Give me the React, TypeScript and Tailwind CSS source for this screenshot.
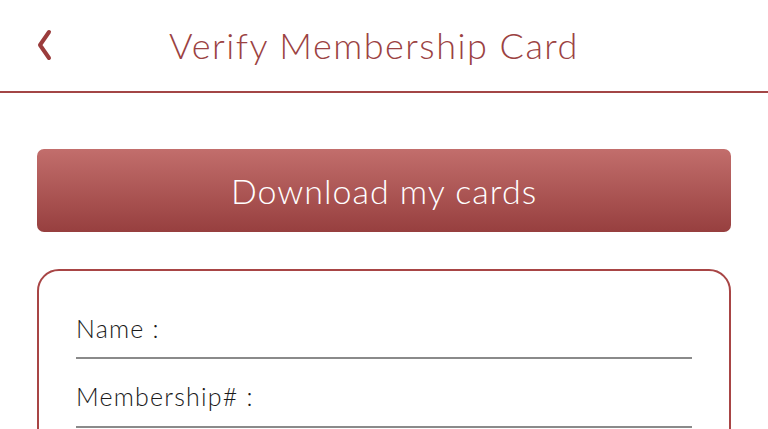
import React from 'react';

const App: React.FC = () => {
  return (
    <div className="w-[768px] h-[429px] overflow-hidden bg-white font-['Lato',sans-serif]">
      {/* Header */}
      <div className="relative h-[93px] border-b-2 border-[#a34646] flex items-center justify-center pr-[20px]">
        <button className="absolute left-[34px] top-[28px] text-[#9b3c3c]">
          <svg width="22" height="34" viewBox="0 0 22 34" fill="none">
            <path d="M15 4 L6 17 L15 30" stroke="currentColor" strokeWidth="4" strokeLinecap="round" strokeLinejoin="round" />
          </svg>
        </button>
        <h1 className="text-[36px] font-light text-[#9b4242] tracking-[1.5px] leading-none -mt-[2px]">Verify Membership Card</h1>
      </div>

      <div className="px-[37px] pt-[56px] flex flex-col gap-[37px]">
        <button className="h-[83px] w-full rounded-[7px] bg-gradient-to-b from-[#c26e6c] to-[#973f3f] text-white text-[34px] font-light tracking-[1px]">
          Download my cards
        </button>

        <div className="border-2 border-[#a84545] rounded-[22px] px-[37px] pt-[42px] pb-6">
          <div className="border-b-2 border-[#8a8a8a] pb-[14px] text-[25px] font-light text-[#1a1a1a] leading-[30px] tracking-[1.2px]">Name :</div>
          <div className="border-b-2 border-[#8a8a8a] pt-[22px] pb-[15px] text-[25px] font-light text-[#1a1a1a] leading-[30px] tracking-[1.2px]">Membership# :</div>
        </div>
      </div>
    </div>
  );
};

export default App;
